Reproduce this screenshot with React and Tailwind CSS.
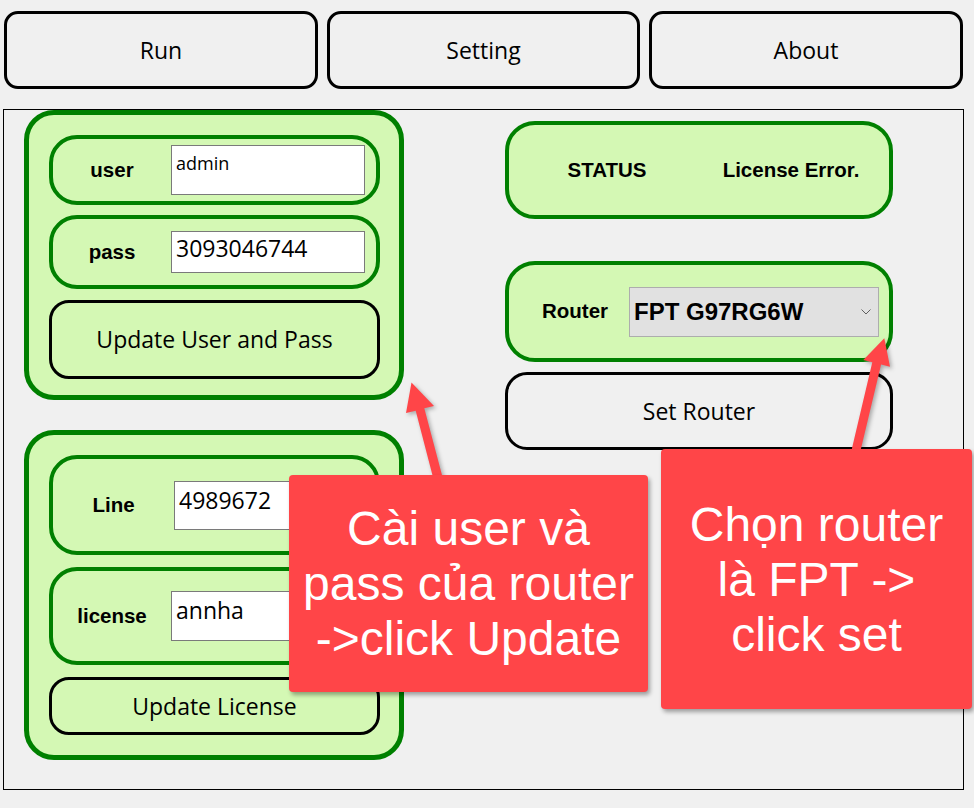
import React from "react";

const GREEN_BG = "bg-[#d4f8b4]";

function TopButton({ w, children }) {
  return (
    <div
      className={`${w} h-[78px] border-[3px] border-black rounded-[14px] flex items-center justify-center text-[23px] text-black`}
    >
      {children}
    </div>
  );
}

function Label({ className = "", children }) {
  return (
    <div
      className={`font-['Liberation_Sans',Arial,sans-serif] font-bold text-[20.5px] text-black text-center ${className}`}
    >
      {children}
    </div>
  );
}

function FieldRow({ h, labelW, label, inputW, inputH, inputClass, value }) {
  return (
    <div
      className={`w-[331px] ${h} border-[4px] border-[#008000] rounded-[28px] flex items-center`}
    >
      <Label className={labelW}>{label}</Label>
      <div
        className={`${inputW} ${inputH} bg-white border border-[#7a7a7a] px-[4px] ${inputClass}`}
      >
        {value}
      </div>
    </div>
  );
}

export default function App() {
  return (
    <div className="relative w-[974px] h-[808px] overflow-hidden bg-[#f0f0f0] font-['Open_Sans',sans-serif] text-black">
      {/* Top tab buttons */}
      <div className="flex gap-[9px] pl-[4px] pt-[11px]">
        <TopButton w="w-[314px]">Run</TopButton>
        <TopButton w="w-[313px]">Setting</TopButton>
        <TopButton w="w-[314px]">About</TopButton>
      </div>

      {/* Main frame */}
      <div className="ml-[3px] mt-[20px] w-[961px] h-[681px] border border-black flex pl-[20px]">
        {/* Left column */}
        <div className="w-[380px] flex flex-col gap-[30px]">
          <div
            className={`w-[380px] h-[290px] border-[5px] border-[#008000] rounded-[30px] ${GREEN_BG} pt-[20px] pl-[20px] flex flex-col`}
          >
            <FieldRow
              h="h-[70px]"
              labelW="w-[118px]"
              label="user"
              inputW="w-[194px]"
              inputH="h-[50px]"
              inputClass="text-[18px] leading-[24px] pt-[5px]"
              value="admin"
            />
            <div className="mt-[10px]">
              <FieldRow
                h="h-[74px]"
                labelW="w-[118px]"
                label="pass"
                inputW="w-[194px]"
                inputH="h-[42px]"
                inputClass="text-[23px] leading-[31px] pt-[1px]"
                value="3093046744"
              />
            </div>
            <div className="mt-[11px] w-[331px] h-[79px] border-[3px] border-black rounded-[20px] flex items-center justify-center text-[23px]">
              Update User and Pass
            </div>
          </div>

          <div
            className={`w-[380px] h-[330px] border-[5px] border-[#008000] rounded-[30px] ${GREEN_BG} pt-[20px] pl-[20px] flex flex-col`}
          >
            <FieldRow
              h="h-[100px]"
              labelW="w-[121px]"
              label="Line"
              inputW="w-[191px]"
              inputH="h-[49px]"
              inputClass="text-[23px] leading-[31px] pt-[3px]"
              value="4989672"
            />
            <div className="mt-[12px]">
              <FieldRow
                h="h-[98px]"
                labelW="w-[118px]"
                label="license"
                inputW="w-[194px]"
                inputH="h-[50px]"
                inputClass="text-[23px] leading-[31px] pt-[3px]"
                value="annha"
              />
            </div>
            <div className="mt-[12px] w-[331px] h-[58px] border-[3px] border-black rounded-[20px] flex items-center justify-center text-[23px]">
              Update License
            </div>
          </div>
        </div>

        {/* Right column */}
        <div className="ml-[101px] w-[388px] pt-[11px] flex flex-col">
          <div
            className={`w-[388px] h-[98px] border-[4px] border-[#008000] rounded-[30px] ${GREEN_BG} flex items-center`}
          >
            <Label className="w-[196px]">STATUS</Label>
            <Label className="w-[172px]">License Error.</Label>
          </div>

          <div
            className={`mt-[42px] w-[388px] h-[101px] border-[4px] border-[#008000] rounded-[30px] ${GREEN_BG} flex items-center`}
          >
            <Label className="pl-[12px] w-[120px]">Router</Label>
            <div className="w-[250px] h-[50px] bg-[#e1e1e1] border border-[#adadad] flex items-center justify-between pl-[4px] pr-[7px]">
              <span className="font-['Liberation_Sans',Arial,sans-serif] font-bold text-[24px]">
                FPT G97RG6W
              </span>
              <svg width="10" height="6" viewBox="0 0 10 6" className="mt-[1px]">
                <path d="M0.5 0.5 L5 5 L9.5 0.5" fill="none" stroke="#606060" strokeWidth="1" />
              </svg>
            </div>
          </div>

          <div className="mt-[10px] w-[388px] h-[78px] border-[3px] border-black rounded-[22px] flex items-center justify-center text-[23px]">
            Set Router
          </div>
        </div>
      </div>

      {/* Arrows */}
      <svg
        className="absolute left-0 top-0 pointer-events-none drop-shadow-[2px_2px_2px_rgba(0,0,0,0.3)]"
        width="974"
        height="808"
        viewBox="0 0 974 808"
      >
        <polygon
          fill="#ff4548"
          points="433.7,480 415.7,410.7 406,413 411.5,382.5 434,406 424.3,408.3 443.3,480"
        />
        <polygon
          fill="#ff4548"
          points="850.4,455 872.3,362.3 863.3,360 884.3,338.3 890,366.7 881.1,364.4 859.5,455"
        />
      </svg>

      {/* Callouts */}
      <div className="absolute left-[289px] top-[475px] w-[359px] h-[217px] bg-[#ff4548] rounded-[4px] shadow-[2px_3px_4px_rgba(0,0,0,0.35)] flex items-center justify-center text-center text-white font-['Liberation_Sans',Arial,sans-serif] text-[48px] leading-[55px]">
        <div>
          Cài user và
          <br />
          pass của router
          <br />
          -&gt;click Update
        </div>
      </div>
      <div className="absolute left-[661px] top-[449px] w-[311px] h-[260px] bg-[#ff4548] rounded-[4px] shadow-[2px_3px_4px_rgba(0,0,0,0.35)] flex items-center justify-center text-center text-white font-['Liberation_Sans',Arial,sans-serif] text-[48px] leading-[55px]">
        <div>
          Chọn router
          <br />
          là FPT -&gt;
          <br />
          click set
        </div>
      </div>
    </div>
  );
}
